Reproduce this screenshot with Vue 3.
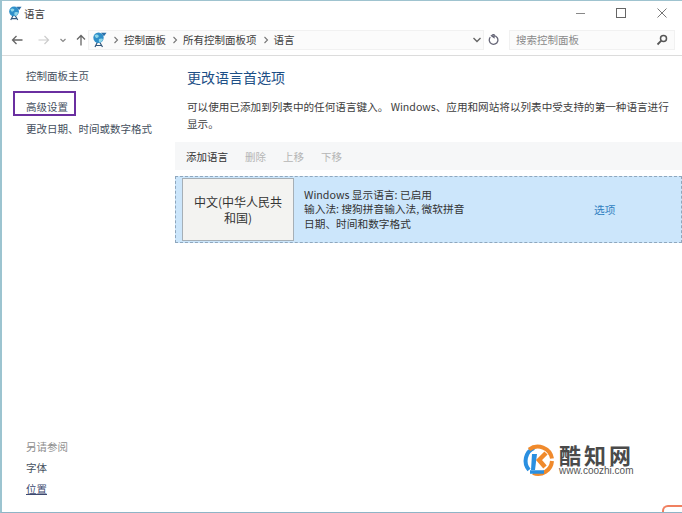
<script setup>
const crumbs = ['控制面板', '所有控制面板项', '语言']
</script>

<template>
  <div class="window">
    <header class="titlebar">
      <svg class="globe small" viewBox="0 0 16 16"><use href="#g" /></svg>
      <span class="title">语言</span>
      <div class="controls">
        <svg viewBox="0 0 9 12" class="ctl"><path d="M0 6.500h9" stroke="#888" fill="none"/></svg>
        <svg viewBox="0 0 10 10" class="ctl sq"><rect x=".5" y=".5" width="9" height="9" stroke="#666" fill="none"/></svg>
        <svg viewBox="0 0 10 10" class="ctl sq"><path d="M.5.5l9 9M9.500.5l-9 9" stroke="#777" fill="none"/></svg>
      </div>
    </header>

    <nav class="navbar">
      <svg class="nav-ic" viewBox="0 0 12 12"><path d="M11.500 6H1.500M5.500 2l-4 4 4 4" stroke="#666" stroke-width="1.300" fill="none"/></svg>
      <svg class="nav-ic fwd" viewBox="0 0 12 12"><path d="M.5 6h10M6.500 2l4 4-4 4" stroke="#ccc" stroke-width="1.200" fill="none"/></svg>
      <svg class="nav-chev" viewBox="0 0 8 8"><path d="M1.500 3l2.500 2.500L6.500 3" stroke="#888" stroke-width="1.200" fill="none"/></svg>
      <svg class="nav-ic up" viewBox="0 0 12 12"><path d="M6 11.500V1.500M2 5.500l4-4 4 4" stroke="#666" stroke-width="1.300" fill="none"/></svg>
      <div class="address">
        <svg class="globe" viewBox="0 0 16 16"><use href="#g" /></svg>
        <template v-for="c in crumbs" :key="c">
          <svg class="sep" viewBox="0 0 6 8"><path d="M1.500 1l3 3-3 3" stroke="#777" stroke-width="1.100" fill="none"/></svg>
          <span class="crumb">{{ c }}</span>
        </template>
        <svg class="addr-chev" viewBox="0 0 10 8"><path d="M1.500 2l3.500 3.500L8.500 2" stroke="#666" stroke-width="1.400" fill="none"/></svg>
      </div>
      <svg class="refresh" viewBox="0 0 12 12"><path d="M2.300 3.200A4.300 4.300 0 1 0 6 1.700M6 0v3.500L3.500 1.700z" stroke="#667" stroke-width="1.300" fill="none"/></svg>
      <div class="search">
        <span>搜索控制面板</span>
        <svg viewBox="0 0 12 12"><circle cx="7.500" cy="4.500" r="3" stroke="#555" stroke-width="1.500" fill="none"/><path d="M5.300 6.700L1.500 10.500" stroke="#555" stroke-width="1.800"/></svg>
      </div>
    </nav>

    <div class="body">
      <aside class="sidebar">
        <div class="side-top">
          <a class="home">控制面板主页</a>
          <a class="adv">高级设置</a>
          <a class="dt">更改日期、时间或数字格式</a>
        </div>
        <div class="side-bottom">
          <span class="see">另请参阅</span>
          <a>字体</a>
          <a class="loc">位置</a>
        </div>
      </aside>

      <main class="main">
        <h1>更改语言首选项</h1>
        <p class="desc">可以使用已添加到列表中的任何语言键入。 Windows、应用和网站将以列表中受支持的第一种语言进行显示。</p>
        <div class="toolbar">
          <span class="on">添加语言</span>
          <span>删除</span>
          <span>上移</span>
          <span>下移</span>
        </div>
        <div class="lang-row">
          <button class="lang-btn">中文(中华人民共和国)</button>
          <div class="lang-info">
            <div>Windows 显示语言: 已启用</div>
            <div>输入法: 搜狗拼音输入法, 微软拼音</div>
            <div>日期、时间和数字格式</div>
          </div>
          <a class="options">选项</a>
        </div>
      </main>
    </div>

    <div class="watermark">
      <svg viewBox="0 0 34 34" class="wm-logo">
        <path d="M8 27A14 14 0 0 1 13 5" stroke="#2a8fe0" stroke-width="4" fill="none"/>
        <path d="M8 6.500A14.500 14.500 0 0 1 31 15.500M31 18A14 14 0 0 1 12 30" stroke="#f08a2c" stroke-width="4" fill="none"/>
        <path d="M9 29h14" stroke="#2a8fe0" stroke-width="3.500"/>
        <path d="M11 11h5l-2 16h-4z" fill="#2a8fe0"/>
        <path d="M25 10L18 17l6 7" stroke="#f08a2c" stroke-width="4.500" fill="none"/>
      </svg>
      <div class="wm-text">
        <div class="wm-name">酷知网</div>
        <div class="wm-url">www.coozhi.com</div>
      </div>
    </div>
    <div class="corner"></div>

    <svg class="defs" width="0" height="0">
      <defs>
        <g id="g">
          <path d="M7 9l-3 6M8 9l3.500 6M4.500 13.500h6.500" stroke="#33567a" stroke-width="1.200" fill="none"/>
          <circle cx="7.500" cy="5.800" r="5.200" fill="#2f8fc9"/>
          <path d="M3.500 3.500c2-1.500 3-1 4 0s-1 2.500-2 2.500-1-1-2-2.500zM8 7c2-1 3.500-.5 4 0-.5 2-2 3.500-3 3.500S7.500 8.500 8 7z" fill="#8fd6e8"/>
          <path d="M10 .8l5.500 0-2.500 3.500z" fill="#2a6fa8"/>
        </g>
      </defs>
    </svg>
  </div>
</template>

<style scoped>
.window {
  position: relative;
  box-sizing: border-box;
  width: 682px;
  height: 513px;
  background: #fff;
  border-top: 1px solid #9fc3cf;
  border-left: 2px solid #9cc4d0;
  border-bottom: 1px solid #8fb4c6;
  display: flex;
  flex-direction: column;
  overflow: hidden;
  font-family: "Noto Sans CJK SC", "Liberation Sans", sans-serif;
  color: #3b3b3b;
  font-size: 10.5px;
}
.defs { position: absolute; }
.titlebar {
  height: 26px;
  box-sizing: border-box;
  display: flex;
  align-items: center;
  padding: 0 0 2px 5px;
}
.globe { width: 16px; height: 16px; flex: none; }
.globe.small { width: 15px; height: 15px; }
.title { margin-left: 2px; font-size: 10.5px; }
.controls {
  margin-left: auto;
  display: flex;
  align-items: center;
  gap: 31px;
  padding-right: 15px;
}
.ctl { width: 9px; height: 12px; }
.ctl.sq { width: 10px; height: 10px; }
.navbar {
  height: 29px;
  box-sizing: border-box;
  display: flex;
  align-items: center;
  border-bottom: 1px solid #dcdcdc;
  padding: 0 0 3px 9px;
}
.nav-ic { width: 12px; height: 12px; flex: none; }
.fwd { margin-left: 15px; }
.nav-chev { width: 8px; height: 8px; margin-left: 9px; flex: none; }
.up { margin-left: 8px; }
.address {
  margin-left: 1px;
  width: 396px;
  height: 20px;
  flex: none;
  display: flex;
  align-items: center;
  background: #fbfbfb;
  box-sizing: border-box;
  padding: 0 1px 0 2px;
  border: 1px solid #f1f1f1;
}
.sep { width: 6px; height: 8px; margin: 0 5px 0 6px; flex: none; }
.crumb { font-size: 10.5px; color: #404040; }
.addr-chev { width: 10px; height: 8px; margin-left: auto; }
.refresh { width: 12px; height: 12px; margin-left: 4px; flex: none; }
.search {
  margin-left: 9px;
  width: 166px;
  height: 20px;
  box-sizing: border-box;
  display: flex;
  align-items: center;
  justify-content: space-between;
  background: #fbfbfb;
  border: 1px solid #f1f1f1;
  padding: 0 6px 0 6px;
  color: #8a8a8a;
}
.search svg { width: 12px; height: 12px; }
.body { flex: 1; display: flex; min-height: 0; }
.sidebar {
  width: 173px;
  flex: none;
  box-sizing: border-box;
  padding: 12px 0 15px 24px;
  display: flex;
  flex-direction: column;
  justify-content: space-between;
}
.sidebar a, .sidebar span { display: block; line-height: 16px; color: #45505e; }
.side-top { display: flex; flex-direction: column; }
.adv {
  position: relative;
  margin-top: 15px;
}
.adv::before {
  content: "";
  position: absolute;
  left: -13px;
  top: -8px;
  width: 59px;
  height: 21px;
  border: 2px solid #6a2fa0;
}
.dt { margin-top: 6px; }
.side-bottom { display: flex; flex-direction: column; gap: 5px; }
.sidebar .see { color: #8f8f8f; }
.sidebar .loc { color: #3e4a70; text-decoration: underline; }
.main { flex: 1; min-width: 0; padding-top: 10px; }
h1 {
  margin: 0 0 0 12px;
  font-size: 14px;
  font-weight: 400;
  color: #1d4f86;
  line-height: 22px;
}
.desc {
  margin: 10px 10px 0 12px;
  line-height: 17px;
  font-size: 10.6px;
  color: #3d3d3d;
}
.toolbar {
  margin-top: 10px;
  height: 28px;
  background: #f6f7f8;
  display: flex;
  align-items: center;
  padding-left: 11px;
  gap: 17px;
  color: #b5b5b5;
}
.toolbar .on { color: #333; }
.lang-row {
  margin-top: 6px;
  height: 67px;
  box-sizing: border-box;
  display: flex;
  align-items: center;
  background: #cce6fb;
  border: 1px dashed #8fa7bd;
  padding-left: 6px;
}
.lang-btn {
  width: 112px;
  height: 63px;
  flex: none;
  box-sizing: border-box;
  background: #f3f3f1;
  border: 1px solid #a6afb6;
  font: inherit;
  font-size: 12px;
  line-height: 16px;
  color: #333;
  padding: 0 8px;
}
.lang-info {
  margin-left: 10px;
  line-height: 14.500px;
  font-size: 10.700px;
  color: #333;
  width: 290px;
  flex: none;
}
.options { color: #2f7fc0; font-size: 10.700px; }
.watermark {
  position: absolute;
  left: 519px;
  top: 442px;
  display: flex;
  align-items: center;
  gap: 4px;
}
.wm-logo { width: 34px; height: 34px; }
.wm-name {
  font-family: "Noto Sans CJK SC", sans-serif;
  font-size: 22px;
  letter-spacing: 3px;
  font-weight: 700;
  color: #4a4a4a;
  line-height: 21px;
}
.wm-url {
  font-family: "Liberation Sans", sans-serif;
  font-size: 10px;
  color: #555;
  line-height: 10px;
  margin-top: 1px;
}
.corner {
  position: absolute;
  right: 0;
  bottom: -1px;
  width: 20px;
  height: 8px;
  border: 2px solid #f08060;
  border-bottom: none;
  border-right: none;
  border-radius: 6px 0 0 0;
  box-sizing: border-box;
}
</style>
